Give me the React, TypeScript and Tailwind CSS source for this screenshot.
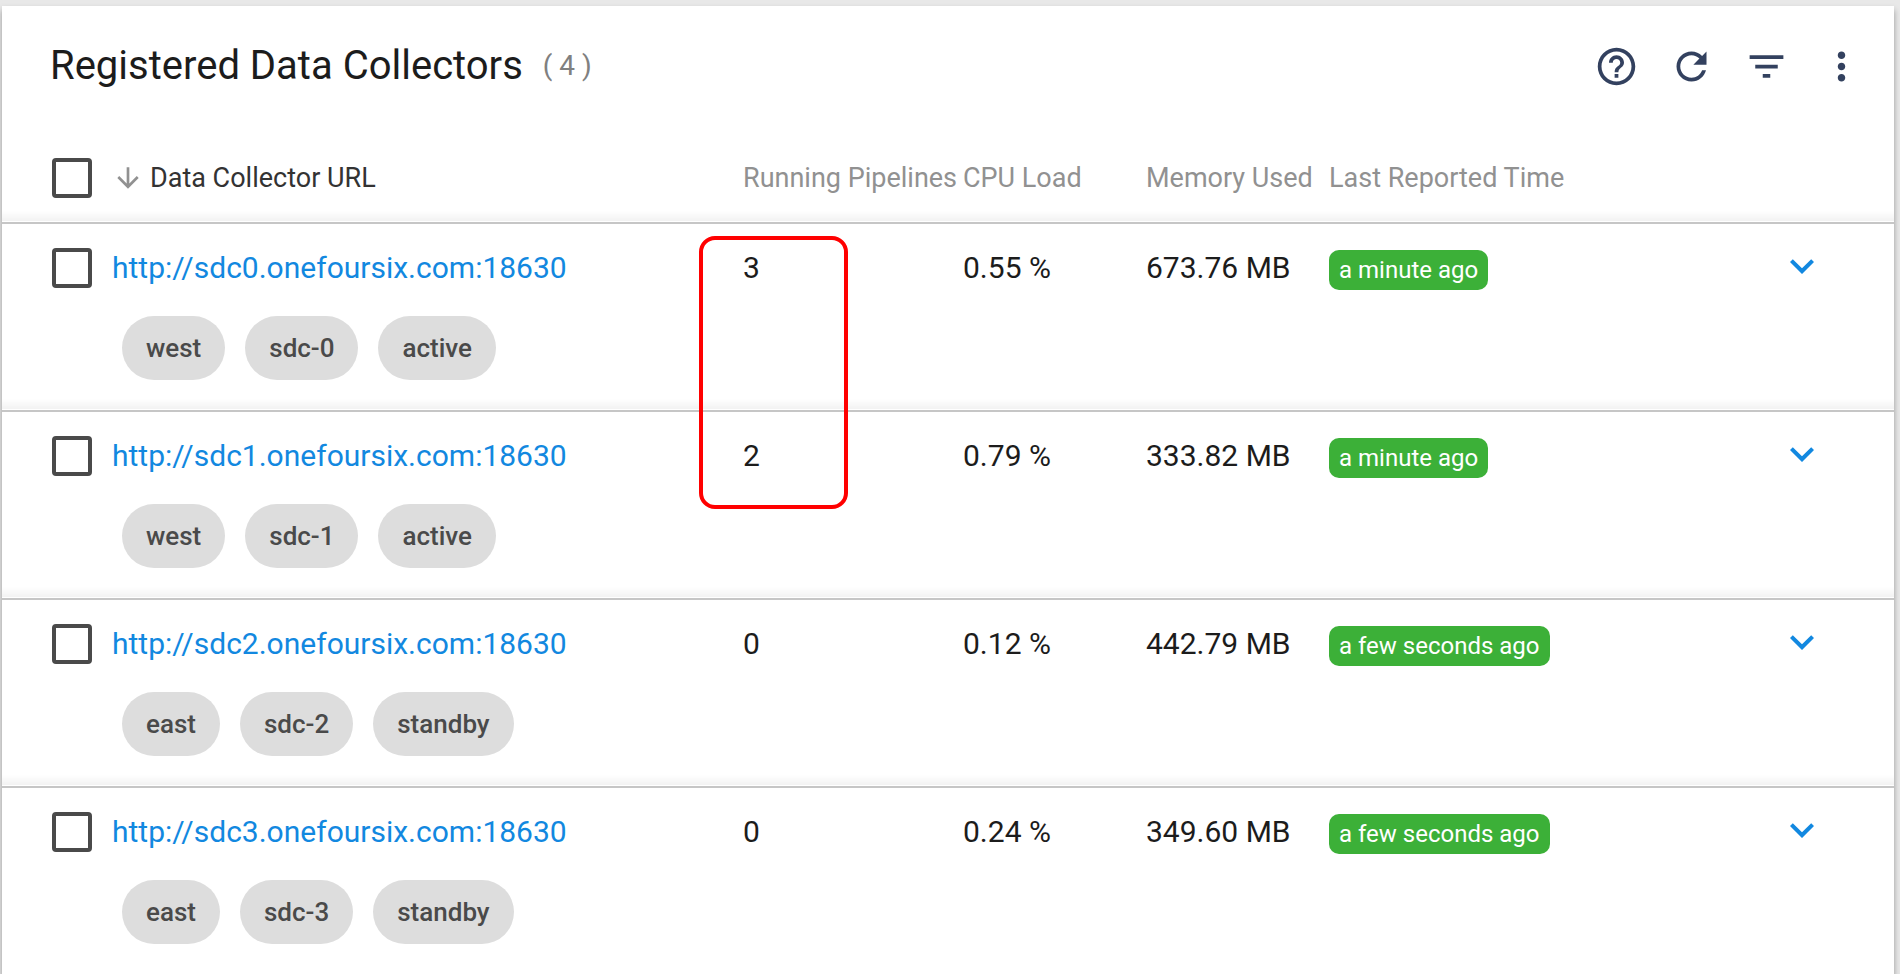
import React from "react";

type Collector = {
  id: number;
  pipelines: number;
  cpu: string;
  memory: string;
  reported: string;
  labels: string[];
};

const collectors: Collector[] = [
  { id: 0, pipelines: 3, cpu: "0.55 %", memory: "673.76 MB", reported: "a minute ago", labels: ["west", "sdc-0", "active"] },
  { id: 1, pipelines: 2, cpu: "0.79 %", memory: "333.82 MB", reported: "a minute ago", labels: ["west", "sdc-1", "active"] },
  { id: 2, pipelines: 0, cpu: "0.12 %", memory: "442.79 MB", reported: "a few seconds ago", labels: ["east", "sdc-2", "standby"] },
  { id: 3, pipelines: 0, cpu: "0.24 %", memory: "349.60 MB", reported: "a few seconds ago", labels: ["east", "sdc-3", "standby"] },
];

const actions = [
  {
    label: "Help",
    path: "M11 18h2v-2h-2v2zm1-16C6.48 2 2 6.48 2 12s4.48 10 10 10 10-4.48 10-10S17.52 2 12 2zm0 18c-4.41 0-8-3.59-8-8s3.59-8 8-8 8 3.59 8 8-3.59 8-8 8zm0-14c-2.21 0-4 1.79-4 4h2c0-1.1.9-2 2-2s2 .9 2 2c0 2-3 1.75-3 5h2c0-2.25 3-2.5 3-5 0-2.21-1.79-4-4-4z",
  },
  {
    label: "Refresh",
    path: "M17.65 6.35C16.2 4.9 14.21 4 12 4c-4.42 0-7.99 3.58-7.99 8s3.57 8 7.99 8c3.73 0 6.84-2.55 7.73-6h-2.08c-.82 2.33-3.04 4-5.65 4-3.31 0-6-2.69-6-6s2.69-6 6-6c1.66 0 3.14.69 4.22 1.78L13 11h7V4l-2.35 2.35z",
  },
  { label: "Filter", path: "M10 18h4v-2h-4v2zM3 6v2h18V6H3zm3 7h12v-2H6v2z" },
  {
    label: "More",
    path: "M12 8c1.1 0 2-.9 2-2s-.9-2-2-2-2 .9-2 2 .9 2 2 2zm0 2c-1.1 0-2 .9-2 2s.9 2 2 2 2-.9 2-2-.9-2-2-2zm0 6c-1.1 0-2 .9-2 2s.9 2 2 2 2-.9 2-2-.9-2-2-2z",
  },
];

function Checkbox({ label }: { label: string }) {
  return (
    <input
      type="checkbox"
      aria-label={label}
      className="block size-10 appearance-none rounded border-4 border-[#4a4a4a] bg-white checked:bg-[#4a4a4a]"
    />
  );
}

function CollectorRow({ item, highlighted }: { item: Collector; highlighted: boolean }) {
  const url = `http://sdc${item.id}.onefoursix.com:18630`;
  return (
    <tr className="h-[188px] border-b-2 border-[#c6c6c6] bg-[linear-gradient(to_top,rgba(0,0,0,0.05),transparent_10px)] align-top text-[30px] leading-10 text-[#1c1c1c] last:border-b-0 last:bg-none">
      <td className="pt-6 pl-[50px]">
        <Checkbox label={`Select ${url}`} />
      </td>
      <td className="pt-6">
        <a href={url} className="block text-[#1288e0]">
          {url}
        </a>
        <ul className="mt-7 ml-2.5 flex gap-5">
          {item.labels.map((label) => (
            <li key={label} className="rounded-full bg-[#dddddd] px-6 text-[26px] leading-[64px] font-medium text-[#4a4a4a]">
              {label}
            </li>
          ))}
        </ul>
      </td>
      <td className="relative pt-6">
        {item.pipelines}
        {highlighted && (
          <div className="pointer-events-none absolute top-3 -left-11 z-10 h-[273px] w-[149px] rounded-2xl border-4 border-[#ff0000]" />
        )}
      </td>
      <td className="pt-6">{item.cpu}</td>
      <td className="pt-6">{item.memory}</td>
      <td className="pt-[26px]">
        <span className="block w-fit rounded-[10px] bg-[#3cb038] px-2.5 text-2xl leading-10 text-white">{item.reported}</span>
      </td>
      <td className="pt-[18px]">
        <button type="button" aria-label={`Show details of ${url}`} className="ml-[50px] block text-[#1288e0]">
          <svg viewBox="0 0 24 24" className="size-12 fill-current">
            <path d="M7.41 8.59 12 13.17l4.59-4.58L18 10l-6 6-6-6z" />
          </svg>
        </button>
      </td>
    </tr>
  );
}

export default function App() {
  return (
    <div className="flex min-h-screen flex-col bg-[#e8e8e8] pt-1.5 pr-1.5 pl-0.5 font-[Roboto,sans-serif]">
      <main className="flex-1 bg-white shadow-[0_4px_6px_0_rgba(0,0,0,0.35)]">
        <header className="flex items-center justify-between pt-9 pr-[30px] pl-12">
          <h1 className="flex items-center gap-5 text-[40px] leading-[48px] text-[#1c1c1c]">
            Registered Data Collectors
            <span className="text-[28px] text-[#808080]">( 4 )</span>
          </h1>
          <div className="flex gap-[30px]">
            {actions.map((action) => (
              <button key={action.label} type="button" aria-label={action.label} className="text-[#33415f]">
                <svg viewBox="0 0 24 24" className="size-[45px] fill-current">
                  <path d={action.path} />
                </svg>
              </button>
            ))}
          </div>
        </header>
        <table className="mt-12 w-full table-fixed border-collapse text-left">
          <colgroup>
            <col className="w-[110px]" />
            <col />
            <col className="w-[220px]" />
            <col className="w-[183px]" />
            <col className="w-[183px]" />
            <col className="w-[399px]" />
            <col className="w-[166px]" />
          </colgroup>
          <thead>
            <tr className="h-[85px] border-b-2 border-[#c6c6c6] bg-[linear-gradient(to_top,rgba(0,0,0,0.05),transparent_10px)] align-top text-[27px] leading-10 whitespace-nowrap text-[#919191]">
              <th className="pt-5 pl-[50px]">
                <Checkbox label="Select all data collectors" />
              </th>
              <th className="pt-5 font-normal text-[#333333]">
                <button type="button" className="flex items-center gap-1.5">
                  <svg viewBox="0 0 24 24" className="size-8 fill-[#919191]">
                    <path d="M20 12l-1.41-1.41L13 16.17V4h-2v12.17l-5.58-5.59L4 12l8 8 8-8z" />
                  </svg>
                  Data Collector URL
                </button>
              </th>
              <th className="pt-5 font-normal">Running Pipelines</th>
              <th className="pt-5 font-normal">CPU Load</th>
              <th className="pt-5 font-normal">Memory Used</th>
              <th className="pt-5 font-normal">Last Reported Time</th>
              <td />
            </tr>
          </thead>
          <tbody>
            {collectors.map((item, index) => (
              <CollectorRow key={item.id} item={item} highlighted={index === 0} />
            ))}
          </tbody>
        </table>
      </main>
    </div>
  );
}
